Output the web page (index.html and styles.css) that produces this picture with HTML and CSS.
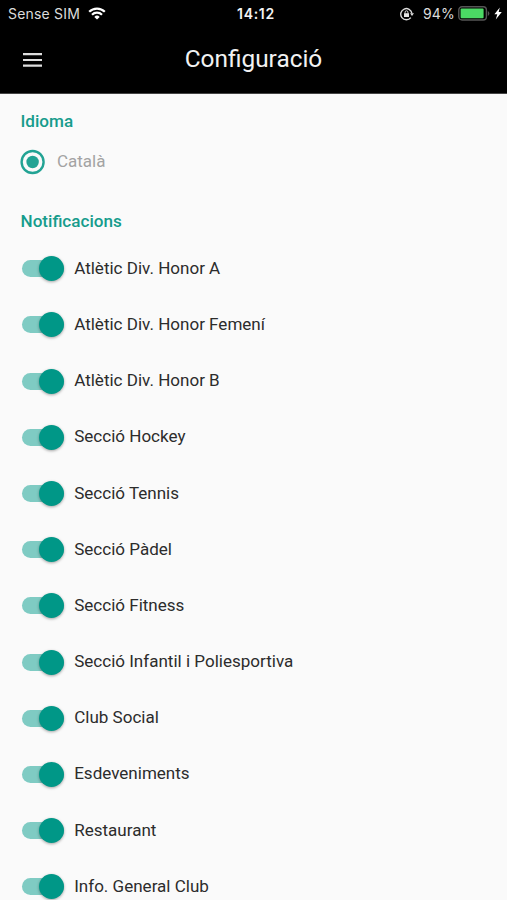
FILE: index.html
```html
<!DOCTYPE html>
<html lang="ca">
<head>
<meta charset="utf-8">
<title>Configuració</title>
<link rel="stylesheet" href="styles.css">
</head>
<body>
<header class="header">
  <div class="status">
    <div class="status-left">
      <span class="carrier">Sense SIM</span>
      <svg class="wifi" width="18" height="13" viewBox="0 0 18 13" fill="none" stroke="#fff" stroke-width="2.2"><path d="M1.2 4.8a11 11 0 0 1 15.6 0M4 7.7a7 7 0 0 1 10 0"/><path d="M9 12.6 6.3 9.9a3.8 3.8 0 0 1 5.4 0z" fill="#fff" stroke="none"/></svg>
    </div>
    <span class="time">14:12</span>
    <div class="status-right">
      <svg class="lock" width="14" height="14" viewBox="0 0 14 14" fill="none" stroke="#dcdcdc"><path d="M10.8 10.6A5.6 5.6 0 1 1 11.9 6.4" stroke-width="1.4"/><path d="M10 6.2h4l-2 2.7z" fill="#dcdcdc" stroke="none"/><path d="M4 6.2h5v3.8H4z" fill="#e4e4e4" stroke="none"/><path d="M5.1 6.4V5.2a1.4 1.4 0 0 1 2.8 0v1.2"/></svg>
      <span class="percent">94%</span>
      <svg class="battery" width="32" height="15" viewBox="0 0 32 15"><rect x=".8" y=".8" width="27.6" height="13.2" rx="3.2" fill="none" stroke="#555" stroke-width="1.4"/><rect x="2.6" y="2.6" width="23" height="9.6" rx="1" fill="#4bd964"/><path d="M29.8 5v5q1.6-.7 1.6-2.5T29.8 5z" fill="#555"/></svg>
      <svg class="bolt" width="8" height="13" viewBox="0 0 8 13"><path d="M5.8.5.4 7.2h2.9L1.8 12.5l6-7.4H4.7z" fill="#fff"/></svg>
    </div>
  </div>
  <div class="toolbar">
    <svg class="menu" width="19" height="14" viewBox="0 0 19 14"><path d="M0 1.2h19M0 7h19M0 12.6h19" stroke="#dedede" stroke-width="2.2"/></svg>
    <h1 class="title">Configuració</h1>
  </div>
</header>
<main class="content">
  <h2 class="heading">Idioma</h2>
  <div class="radio-row">
    <svg class="radio" width="26" height="26" viewBox="0 0 26 26"><circle cx="12.6" cy="13" r="11" fill="none" stroke="#22a394" stroke-width="2.4"/><circle cx="12.6" cy="13" r="6.2" fill="#22a394"/></svg>
    <span class="radio-label">Català</span>
  </div>
  <h2 class="heading">Notificacions</h2>
  <ul class="list">
    <li class="row"><span class="switch"><span class="thumb"></span></span><span class="label">Atlètic Div. Honor A</span></li>
    <li class="row"><span class="switch"><span class="thumb"></span></span><span class="label">Atlètic Div. Honor Femení</span></li>
    <li class="row"><span class="switch"><span class="thumb"></span></span><span class="label">Atlètic Div. Honor B</span></li>
    <li class="row"><span class="switch"><span class="thumb"></span></span><span class="label">Secció Hockey</span></li>
    <li class="row"><span class="switch"><span class="thumb"></span></span><span class="label">Secció Tennis</span></li>
    <li class="row"><span class="switch"><span class="thumb"></span></span><span class="label">Secció Pàdel</span></li>
    <li class="row"><span class="switch"><span class="thumb"></span></span><span class="label">Secció Fitness</span></li>
    <li class="row"><span class="switch"><span class="thumb"></span></span><span class="label">Secció Infantil i Poliesportiva</span></li>
    <li class="row"><span class="switch"><span class="thumb"></span></span><span class="label">Club Social</span></li>
    <li class="row"><span class="switch"><span class="thumb"></span></span><span class="label">Esdeveniments</span></li>
    <li class="row"><span class="switch"><span class="thumb"></span></span><span class="label">Restaurant</span></li>
    <li class="row"><span class="switch"><span class="thumb"></span></span><span class="label">Info. General Club</span></li>
  </ul>
</main>
</body>
</html>
```
FILE: styles.css
```css
* { box-sizing: border-box; }
body {
  margin: 0;
  height: 900px;
  overflow: hidden;
  background: #fafafa;
  color: #2c2c2c;
  font-family: Roboto, "Liberation Sans", sans-serif;
}
svg { display: block; flex: none; }
.header {
  height: 94px;
  background: #000;
  border-bottom: 1px solid #444;
}
.status {
  display: grid;
  grid-template-columns: 1fr auto 1fr;
  align-items: center;
  height: 27px;
  padding: 0 5px 0 8px;
  font-family: Inter, "Liberation Sans", sans-serif;
  font-size: 14px;
  line-height: 27px;
  color: #dcdcdc;
}
.status-left, .status-right { display: flex; align-items: center; }
.status-right { justify-content: flex-end; }
.carrier { letter-spacing: .2px; }
.wifi { margin-left: 8px; }
.time { padding-left: 2px; font-weight: 600; letter-spacing: .7px; color: #f4f4f4; }
.percent { margin: 0 3px 0 9px; letter-spacing: .2px; }
.bolt { margin-left: 4px; }
.toolbar {
  display: grid;
  grid-template-columns: 60px 1fr 60px;
  align-items: center;
  height: 65px;
}
.menu { margin-left: 23px; }
.title {
  margin: 0 0 2px;
  text-align: center;
  font-size: 24.4px;
  font-weight: 400;
  line-height: 32px;
  color: #f2f2f2;
}
.content { padding: 15px 20px 0; }
.heading {
  margin: 0 0 0 .5px;
  font-size: 17.1px;
  line-height: 24px;
  font-weight: 500;
  color: #169c8c;
}
.radio-row {
  display: flex;
  align-items: center;
  height: 26px;
  margin: 16px 0 34px;
}
.radio-label { margin: 0 0 2px 11px; font-size: 17px; color: #a3a3a3; }
.list { list-style: none; margin: 6.7px 0 0; padding: 0; }
.row { display: flex; align-items: center; height: 56.2px; }
.switch {
  display: flex;
  align-items: center;
  justify-content: flex-end;
  width: 42.6px;
  height: 17px;
  margin: 2px 0 0 1.8px;
  border-radius: 9px;
  background: #7fcbc3;
}
.thumb {
  width: 25px;
  height: 25px;
  flex: none;
  border-radius: 50%;
  background: #009787;
  box-shadow: 0 1px 3px rgba(0, 0, 0, .35);
}
.label { margin-left: 9.8px; font-size: 17.05px; white-space: nowrap; }
```
